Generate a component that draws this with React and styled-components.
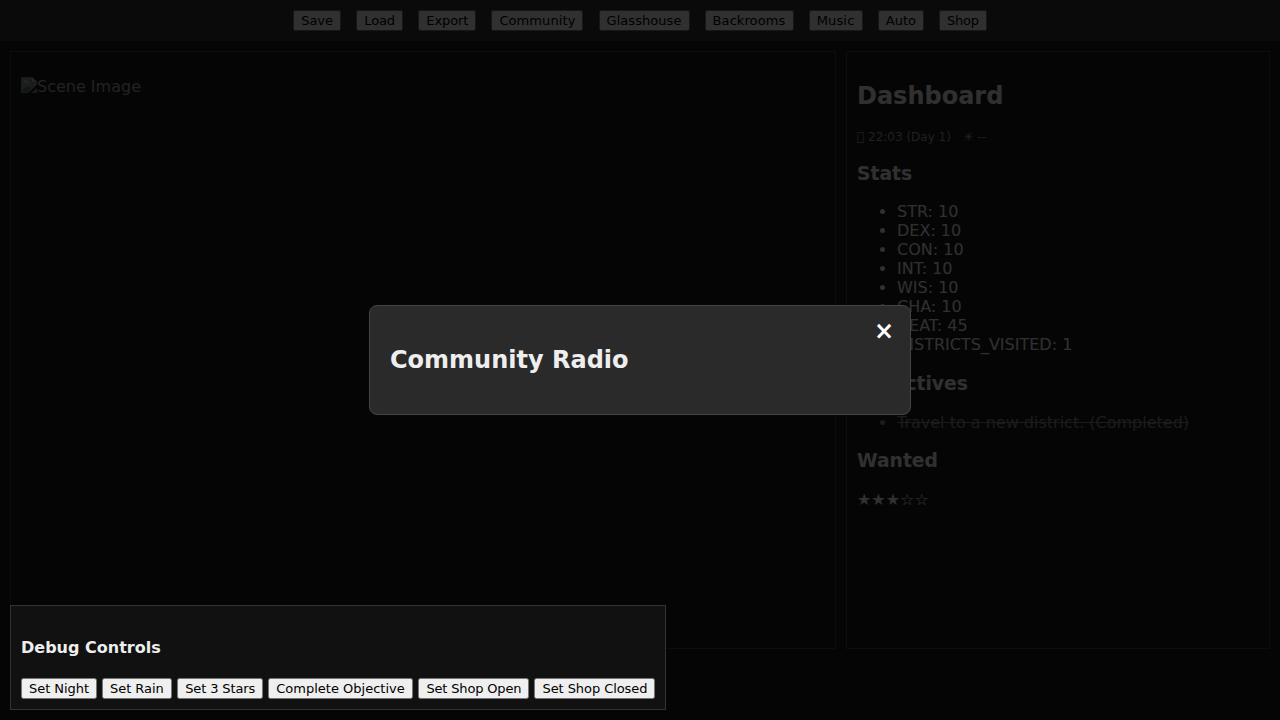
import React from "react";
import styled, { createGlobalStyle } from "styled-components";

const GlobalStyle = createGlobalStyle`
  body {
    margin: 0;
    background: #1a1a1a;
    color: #eee;
    font-family: "DejaVu Sans", sans-serif;
    font-size: 16px;
    overflow: hidden;
  }
`;

const Page = styled.div`
  display: flex;
  flex-direction: column;
  height: 720px;
`;

const TopBar = styled.header`
  background: #333;
  padding: 10px;
  text-align: center;
  height: 21px;
`;

const Button = styled.button`
  font-family: "DejaVu Sans", sans-serif;
  font-size: 13px;
  letter-spacing: ${(p) => p.$tracking}px;
  width: ${(p) => p.$width}px;
  height: 21px;
  padding: 1px 0 1px 6px;
  text-align: left;
  white-space: nowrap;
  margin: ${(p) => (p.$spaced ? "0 5px" : "0")};
`;

const Main = styled.main`
  display: flex;
  gap: 10px;
  padding: 10px;
  height: 598px;
`;

const Panel = styled.section`
  flex: ${(p) => p.$grow} 1 0;
  padding: 10px;
  border: 1px solid #444;
`;

const Scene = styled.div`
  display: flex;
  align-items: flex-start;
  margin-top: 15px;
  color: #aaa;
  line-height: 19px;
`;

const TimeLine = styled.div`
  display: flex;
  gap: 12px;
  font-size: 12px;
  color: #9a9ab5;
`;

const Objective = styled.li`
  color: #888;
  text-decoration: line-through;
`;

const Overlay = styled.div`
  position: fixed;
  inset: 0;
  display: flex;
  align-items: center;
  justify-content: center;
  background: rgba(0, 0, 0, 0.8);
`;

const Modal = styled.div`
  position: relative;
  width: 500px;
  padding: 20px;
  background: #2a2a2a;
  border: 1px solid #444;
  border-radius: 8px;
`;

const Close = styled.span`
  position: absolute;
  top: 10px;
  right: 16px;
  font-size: 24px;
  line-height: 31px;
  font-weight: bold;
  color: #fff;
  cursor: pointer;
`;

const DebugPanel = styled.div`
  position: fixed;
  bottom: 10px;
  left: 10px;
  padding: 10px;
  background: #111;
  border: 1px solid #333;
`;

const actions = [
  ["Save", 48, 0],
  ["Load", 47, -0.1],
  ["Export", 58, -0.1],
  ["Community", 92, 0.09],
  ["Glasshouse", 91, 0.06],
  ["Backrooms", 89, 0.08],
  ["Music", 54, 0.15],
  ["Auto", 46, 0],
  ["Shop", 48, -0.17],
];
const stats = [
  ["STR", 10], ["DEX", 10], ["CON", 10], ["INT", 10],
  ["WIS", 10], ["CHA", 10], ["HEAT", 45], ["DISTRICTS_VISITED", 1],
];
const debugActions = [
  ["Set Night", 76, -0.04],
  ["Set Rain", 70, -0.05],
  ["Set 3 Stars", 86, -0.12],
  ["Complete Objective", 145, 0],
  ["Set Shop Open", 111, -0.16],
  ["Set Shop Closed", 121, -0.07],
];

const BrokenImage = () => (
  <svg width="16" height="16" viewBox="0 0 16 16">
    <path d="M0 0H11L16 5V8L7 16H0Z" fill="#808080" />
    <path d="M1 1H10V6H15V7.5L6.5 15H1Z" fill="#8c9298" />
    <path d="M2.5 5C2.5 3 5 2.5 6 4C7.5 3.5 8 5 7.5 6H3Z" fill="#b0b4b8" />
    <path d="M1 15C2 11 6 8.5 10.5 10.5L6.5 15Z" fill="#4a7a34" />
    <path d="M11 0L16 5H11Z" fill="#b8b8b8" />
    <path d="M16 11V16H10Z" fill="#808080" />
  </svg>
);

export default function App() {
  return (
    <>
      <GlobalStyle />
      <Page>
        <TopBar>
          {actions.map(([label, width, tracking]) => (
            <React.Fragment key={label}>
              <Button $spaced $width={width} $tracking={tracking}>{label}</Button>{" "}
            </React.Fragment>
          ))}
        </TopBar>
        <Main>
          <Panel $grow={2}>
            <Scene>
              <BrokenImage />
              <span>Scene Image</span>
            </Scene>
          </Panel>
          <Panel $grow={1}>
            <h2>Dashboard</h2>
            <TimeLine>
              <span>{"\uE9A1 22:03 (Day 1)"}</span>
              <span>{"\u2600 --"}</span>
            </TimeLine>
            <h3>Stats</h3>
            <ul>
              {stats.map(([name, value]) => (
                <li key={name}>{`${name}: ${value}`}</li>
              ))}
            </ul>
            <h3>Objectives</h3>
            <ul>
              <Objective>Travel to a new district. (Completed)</Objective>
            </ul>
            <h3>Wanted</h3>
            <div>★★★☆☆</div>
          </Panel>
        </Main>
      </Page>
      <Overlay>
        <Modal>
          <Close>×</Close>
          <h2>Community Radio</h2>
        </Modal>
      </Overlay>
      <DebugPanel>
        <h4>Debug Controls</h4>
        {debugActions.map(([label, width, tracking], i) => (
          <React.Fragment key={label}>
            {i > 0 && " "}
            <Button $width={width} $tracking={tracking}>{label}</Button>
          </React.Fragment>
        ))}
      </DebugPanel>
    </>
  );
}
